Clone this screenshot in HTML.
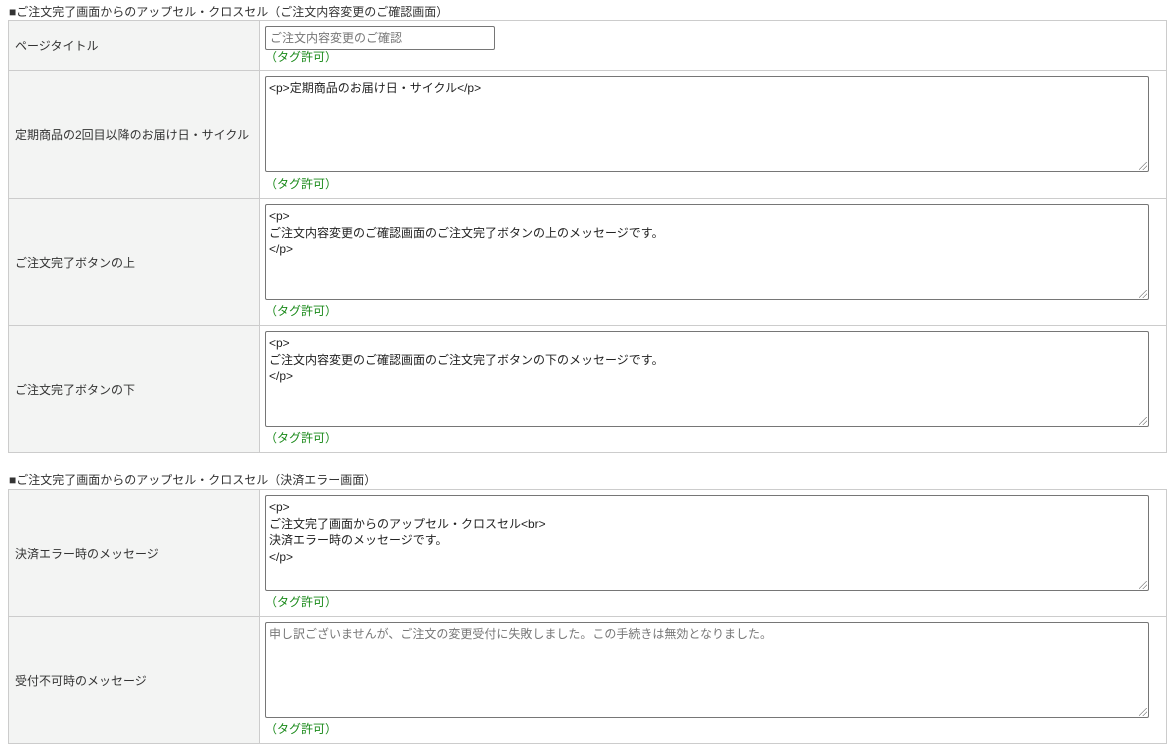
<!DOCTYPE html>
<html><head><meta charset="utf-8"><style>
*{box-sizing:border-box;margin:0;padding:0}
body{width:1174px;height:751px;background:#fff;font-family:"Liberation Sans","Noto Sans CJK JP",sans-serif;font-size:12px;color:#333;position:relative;overflow:hidden}
.h{position:absolute;left:9px;font-size:12px;color:#333;line-height:14px}
.row{position:absolute;left:8px;width:1159px;border:1px solid #ccc;border-bottom:none;}
.row.last{border-bottom:1px solid #ccc}
.lab{position:absolute;left:0;top:0;bottom:0;width:251px;background:#f3f4f3;border-right:1px solid #ccc;display:flex;align-items:center;padding-left:6px;color:#333}
.ta{position:absolute;left:256px;width:884px;height:96px;border:1px solid #767676;border-radius:2px;background:#fff;padding:3px 3px;line-height:16.5px;color:#222;white-space:pre}
.ta::after{content:"";position:absolute;right:1px;bottom:1px;width:8px;height:8px;background:linear-gradient(135deg,transparent 45%,#888 46%,#888 52%,transparent 53%,transparent 70%,#888 71%,#888 77%,transparent 78%)}
.ph{color:#777}
.tag{position:absolute;left:256px;color:#1a8a1a;line-height:14px}
.in{position:absolute;left:256px;top:5px;width:230px;height:24px;border:1px solid #767676;border-radius:2px;padding:3px 4px;color:#777;line-height:16px}
</style></head><body>
<div class="h" style="top:5px">■ご注文完了画面からのアップセル・クロスセル（ご注文内容変更のご確認画面）</div>
<div class="row" style="top:20px;height:50px"><div class="lab">ページタイトル</div><div class="in">ご注文内容変更のご確認</div><div class="tag" style="top:29px">（タグ許可）</div></div>
<div class="row" style="top:70px;height:128px"><div class="lab">定期商品の2回目以降のお届け日・サイクル</div><div class="ta" style="top:5px">&lt;p&gt;定期商品のお届け日・サイクル&lt;/p&gt;</div><div class="tag" style="top:106px">（タグ許可）</div></div>
<div class="row" style="top:198px;height:127px"><div class="lab">ご注文完了ボタンの上</div><div class="ta" style="top:5px">&lt;p&gt;
ご注文内容変更のご確認画面のご注文完了ボタンの上のメッセージです。
&lt;/p&gt;</div><div class="tag" style="top:105px">（タグ許可）</div></div>
<div class="row last" style="top:325px;height:128px"><div class="lab">ご注文完了ボタンの下</div><div class="ta" style="top:5px">&lt;p&gt;
ご注文内容変更のご確認画面のご注文完了ボタンの下のメッセージです。
&lt;/p&gt;</div><div class="tag" style="top:105px">（タグ許可）</div></div>

<div class="h" style="top:473px">■ご注文完了画面からのアップセル・クロスセル（決済エラー画面）</div>
<div class="row" style="top:489px;height:127px"><div class="lab">決済エラー時のメッセージ</div><div class="ta" style="top:5px">&lt;p&gt;
ご注文完了画面からのアップセル・クロスセル&lt;br&gt;
決済エラー時のメッセージです。
&lt;/p&gt;</div><div class="tag" style="top:105px">（タグ許可）</div></div>
<div class="row last" style="top:616px;height:128px"><div class="lab">受付不可時のメッセージ</div><div class="ta ph" style="top:5px">申し訳ございませんが、ご注文の変更受付に失敗しました。この手続きは無効となりました。</div><div class="tag" style="top:105px">（タグ許可）</div></div>
</body></html>
